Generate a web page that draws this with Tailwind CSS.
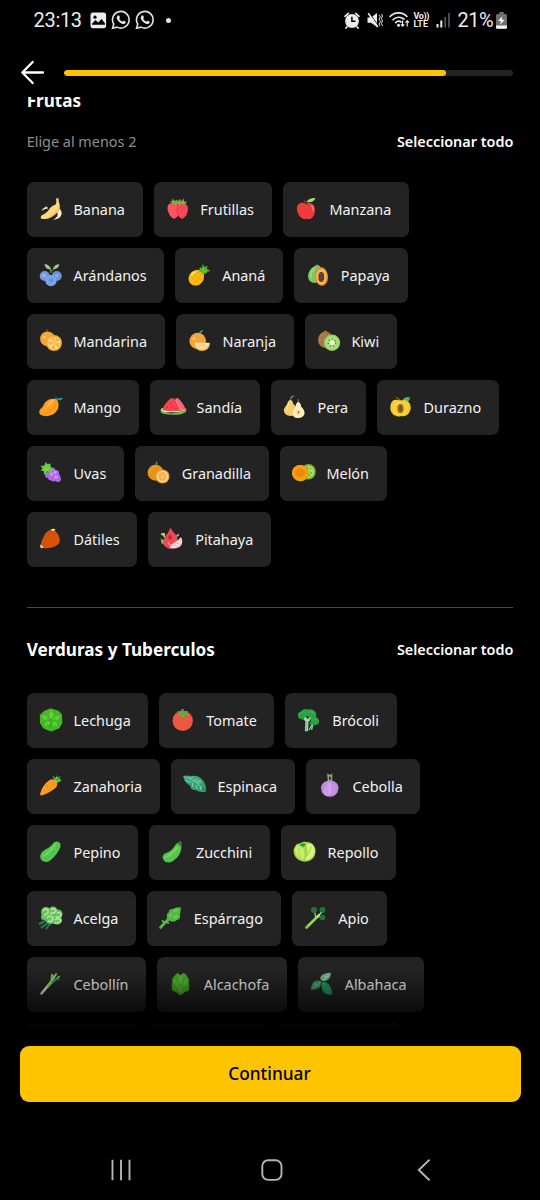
<!DOCTYPE html>
<html lang="es">
<head>
<meta charset="utf-8">
<title>Alimentos</title>
<script src="https://cdn.jsdelivr.net/npm/@tailwindcss/browser@4"></script>
</head>
<body class="bg-black">
<div class="flex h-[1200px] w-[540px] flex-col overflow-hidden bg-black font-['Noto_Sans',sans-serif] text-white">

  <!-- Status bar -->
  <div class="flex h-10 shrink-0 items-center pl-[33.5px] pr-[33px] font-[Roboto,sans-serif] text-[20px] text-[#ececec]">
    <span class="w-[56px] tracking-[-0.3px]">23:13</span>
    <svg class="h-[17px] w-[17px]" viewBox="0 0 17 17"><rect x=".5" y=".5" width="15.6" height="15.8" rx="2.5" fill="#ececec"/><circle cx="5" cy="5.2" r="1.6" fill="#000"/><path d="M2 11.8 5.5 8l2.6 2.5L11.6 7l3.3 4.2v1.6H2z" fill="#000"/></svg>
    <svg class="ml-[4.5px] h-[20px] w-[20px]" viewBox="0 0 20 20"><path d="M1.6 18.2 2.7 14A8.3 8.3 0 1 1 6 17.1z" fill="none" stroke="#e4e4e4" stroke-width="1.6"/><path d="M6.8 5.6c.5-.5 1.100-.4 1.400.2l.7 1.500c.2.5-.6 1.100-.6 1.400.6 1.300 1.600 2.200 3 2.800.4.1 1-.9 1.400-.8l1.700.9c.6.3.2 1.500-.4 2-1.300 1-3.200.4-4.900-.8-1.800-1.300-3.500-3.300-3.400-5.200 0-.8.5-1.500 1.100-2z" fill="#e4e4e4"/></svg>
    <svg class="ml-[3.5px] h-[20px] w-[20px]" viewBox="0 0 20 20"><path d="M1.6 18.2 2.7 14A8.3 8.3 0 1 1 6 17.1z" fill="none" stroke="#e4e4e4" stroke-width="1.6"/><path d="M6.8 5.6c.5-.5 1.100-.4 1.400.2l.7 1.500c.2.5-.6 1.100-.6 1.400.6 1.300 1.600 2.200 3 2.800.4.1 1-.9 1.400-.8l1.700.9c.6.3.2 1.500-.4 2-1.300 1-3.200.4-4.900-.8-1.800-1.300-3.500-3.300-3.400-5.200 0-.8.5-1.500 1.100-2z" fill="#e4e4e4"/></svg>
    <span class="ml-[11px] h-[5px] w-[5px] rounded-full bg-[#e4e4e4]"></span>
    <span class="flex-1"></span>
    <svg class="h-[17px] w-[16px]" viewBox="0 0 16 17"><circle cx="8" cy="9" r="6.900" fill="#ececec"/><path d="M1 4.300 4.300 1.300M15 4.300 11.700 1.300M3 14.800l-1 1.200M13 14.800l1 1.200" stroke="#ececec" stroke-width="1.700" stroke-linecap="round"/><path d="M7.900 4.800V9.300H11.500" fill="none" stroke="#000" stroke-width="1.500"/></svg>
    <svg class="ml-[6.500px] h-[17px] w-[16px]" viewBox="0 0 16 17"><path d="M.5 5.500H4L10 1v14L4 10.800H.5z" fill="#ececec"/><path d="M1.800 .3 12.300 15" stroke="#000" stroke-width="1"/><path d="M1.200 1.300 10.800 15" stroke="#ececec" stroke-width="1.600"/><path d="M12 3l1.500 2L12 7l1.500 2.500L12 12l1 2M14.500 2l1 2-1 2.300 1 2.500-1 2.500 1 2.500" fill="none" stroke="#ececec" stroke-width="1"/></svg>
    <svg class="ml-[6px] h-[18px] w-[21px]" viewBox="0 0 21 18"><g fill="none" stroke="#ececec" stroke-width="1.600" stroke-linecap="round"><path d="M1 5.500C5.500.6 13.500.6 18 5.500M4 8.700C7 5.500 12 5.400 15 8.200M6.800 11.600C8.300 10 10.600 9.900 12 11"/></g><circle cx="9.500" cy="14.200" r="1.500" fill="#ececec"/><path d="M13.600 9.500v5.500M11.900 13.300l1.700 1.900 1.700-1.900M18.200 15.500V10M16.500 11.600l1.700-1.900 1.700 1.900" fill="none" stroke="#ececec" stroke-width="1.200"/></svg>
    <span class="ml-[4px] flex w-[17px] flex-col text-[9px] font-bold leading-[8.500px]"><span class="tracking-[-0.4px]">Vo))</span><span>LTE</span></span>
    <svg class="ml-[5px] h-[16px] w-[15px]" viewBox="0 0 15 16"><path d="M1.500 12v3.500" stroke="#ececec" stroke-width="2"/><path d="M5.300 8.500v7" stroke="#ececec" stroke-width="2"/><path d="M9.200 5v10.500M13 1v14.500" stroke="#5b5b5b" stroke-width="1.600"/></svg>
    <span class="ml-[7px] w-[37.500px] tracking-[-0.5px]">21%</span>
    <svg class="ml-[1px] h-[17px] w-[11px]" viewBox="0 0 11 17"><path d="M3.300 0h4.400v2H9.500Q11 2 11 3.500V15.300Q11 16.800 9.500 16.800h-8Q0 16.800 0 15.300V3.500Q0 2 1.500 2H3.300z" fill="#707070"/><path d="M0 13.500H11v1.800q0 1.500-1.500 1.500h-8Q0 16.800 0 15.300z" fill="#f4f4f4"/><path d="M6.300 4.300 2.200 9h2.600l-.6 3.600L8.700 7.700H5.900z" fill="#fff"/></svg>
  </div>

  <!-- Progress header -->
  <header class="flex h-[57px] shrink-0 items-start pl-[20px] pr-[26.700px]">
    <svg class="mt-[20px] h-[25px] w-[25px]" viewBox="0 0 25 25"><path d="M12.700 2 2.300 12.500 12.700 23M2.600 12.500H23" fill="none" stroke="#fff" stroke-width="2.300" stroke-linecap="round" stroke-linejoin="round"/></svg>
    <div class="ml-[19.200px] mt-[29.500px] h-[6.500px] flex-1 overflow-hidden rounded-full bg-[#232323]">
      <div class="h-full w-[85.100%] rounded-full bg-[#ffc400]"></div>
    </div>
  </header>

  <!-- Scrollable list -->
  <main class="relative h-[949px] shrink-0 overflow-hidden">
    <div class="-mt-[8px] px-[26.700px]">
      <h2 class="h-6 text-[17.100px] font-bold leading-6">Frutas</h2>
      <div class="mt-[16.500px] flex h-6 items-center justify-between text-[14.400px]">
        <span class="text-[#8e8e8e]">Elige al menos 2</span>
        <button class="font-semibold">Seleccionar todo</button>
      </div>
      <div id="frutas" class="mt-[28px] flex flex-col gap-[11px]"></div>
      <hr class="mt-[40px] border-t border-[#474747]">
      <div class="mt-[30px] flex h-6 items-center justify-between">
        <h2 class="pt-px text-[17.150px] font-bold leading-6">Verduras y Tuberculos</h2>
        <button class="text-[14.400px] font-semibold">Seleccionar todo</button>
      </div>
      <div id="verduras" class="mt-[31px] flex flex-col gap-[11px]"></div>
    </div>
    <div class="pointer-events-none absolute inset-x-0 bottom-0 h-[76px] bg-gradient-to-b from-transparent to-black to-[82%]"></div>
  </main>

  <div class="shrink-0 px-[19.500px]">
    <button class="h-[55.500px] w-full rounded-[9px] bg-[#ffc400] pr-px text-[17.300px] font-medium text-black">Continuar</button>
  </div>

  <!-- System navigation -->
  <nav class="mt-[56.500px] flex h-6 shrink-0 items-center pl-[109px]">
    <svg class="h-6 w-6" viewBox="0 0 24 24"><path d="M3.500 1.800v20.400M12 1.800v20.400M20.500 1.800v20.400" stroke="#b4b4b4" stroke-width="1.900"/></svg>
    <svg class="ml-[127px] h-6 w-6" viewBox="0 0 24 24"><rect x="2.300" y="2.300" width="19.200" height="19.600" rx="5.800" fill="none" stroke="#b4b4b4" stroke-width="1.900"/></svg>
    <svg class="ml-[127px] h-6 w-6" viewBox="0 0 24 24"><path d="M18.500 1.800 7.800 12 18.500 22.200" fill="none" stroke="#b4b4b4" stroke-width="1.900"/></svg>
  </nav>
</div>

<script>
const icons = {
  banana: '<path d="M8 9.500Q3.500 10.500 2.700 14Q5 11.500 9 11.500z" fill="#f7e3a6"/><path d="M14.500 8.500Q23.500 11 22.500 17.500Q21 22.500 14 22.700Q19.500 20 18.500 16Q17.500 13.500 13 12z" fill="#fff0c2"/><path d="M17 1.500 19.500 1.200Q19.500 5 20.800 8Q21 14 15.500 18Q9 23.500 2 21.500Q1 20 2.500 18.500Q8.500 16 11 11Q13 8.500 16.700 7.500Q18 5 17 1.500z" fill="#fdd880"/><path d="M20.500 9Q17 17 8 20.500Q15 19.500 18.500 15Q21 12 20.500 9z" fill="#f3b95a"/>',
  frutilla: '<path d="M7 6Q1 5.500 1.500 12Q2.500 19 8 22Q13 20 13.500 13V6z" fill="#ff5263"/><path d="M15 6Q11 6 10.500 12Q10.500 18 15.500 22Q22 20 22 11Q21 5.500 15 6z" fill="#f9455a"/><path d="M11.500 7Q9.500 13 13 20" fill="none" stroke="#d93a50" stroke-width=".8"/><path d="M3.500 4 6 4.500 6.500 1.500 8.500 4 11 2.500 11.500 4.500 14 2 15 4.500 17.500 1.500 18 4.500 21 4.500 18.500 8 15.500 6.500 13.500 8 11 6.500 8 8z" fill="#79b33b"/><path d="M5 11v1M8 14v1M5.500 17v1M15 11v1M18 14v1M15 17v1" stroke="#ff7d88" stroke-width=".8"/>',
  manzana: '<path d="M11.500 7Q6 3.500 2.700 8Q.5 13 4.500 19Q7.500 23.500 11.500 21.800Q16 23.500 18.800 18.500Q21.500 12 18.500 8Q15.500 4.500 11.500 7z" fill="#ee3b3c"/><path d="M16 8.500Q18.500 9.500 17.800 13.500" fill="none" stroke="#ff8380" stroke-width="1.400"/><path d="M11.500 8Q11 5 9.500 3.500" fill="none" stroke="#8f3930" stroke-width="1.300"/><path d="M11.500 5Q14 .7 20.500 1Q18 6.500 11.500 5z" fill="#a4e36b"/>',
  arandanos: '<path d="M12 10Q12 6 10.500 3.500M12 8Q14 7.500 16 5" fill="none" stroke="#6fa15b" stroke-width="1.100"/><path d="M5.500 1Q11 1.500 11.200 6.500Q6 6 5.500 1zM20.500 1.200Q15 1.200 14 6Q19 6.500 20.500 1.200z" fill="#a2c98c"/><circle cx="5.700" cy="13" r="5" fill="#7099dc"/><circle cx="17.800" cy="13" r="5" fill="#6a93d8"/><circle cx="12" cy="17.500" r="5.700" fill="#7da3e6"/><circle cx="5" cy="12.500" r="2" fill="#8fb3ee"/><circle cx="18" cy="12.500" r="1.900" fill="#86aae6"/><path d="M10 17.500l2 1.500 2-1.500-.5-2h-3z" fill="#6389cf"/>',
  anana: '<ellipse cx="9.300" cy="14.700" rx="7.300" ry="8.300" transform="rotate(40 9.300 14.700)" fill="#fcbc14"/><path d="M4 14 12 20M5.500 10.500 15 17M9.500 8 16 13M4 18 11 8.500M7 21 15 10.500" stroke="#f0a20f" stroke-width=".8"/><path d="M4.500 12Q6 9.500 9 9" stroke="#ffe765" stroke-width="1.500" fill="none"/><path d="M12 8 13 4 15 5 15.500 1 18 4 20.500 2.500 20 6 23.500 7.500 20 9.500 17.500 11.500z" fill="#4fa42e"/><path d="M14 8 17.500 5M15.500 9.500 20 7" stroke="#80ce3c" stroke-width="1.300"/>',
  papaya: '<path d="M10 2.500Q10.500 1 12 2Q16 3 16 11Q15.500 19 9 20Q2 19.500 2 13Q2.500 6.500 8 3.500z" fill="#7fc563"/><path d="M5 15Q3.500 9 9 4.500" fill="none" stroke="#a0d780" stroke-width="1.700"/><ellipse cx="15.500" cy="13.500" rx="6.500" ry="9.300" transform="rotate(-5 15.500 13.500)" fill="#eb8a35"/><ellipse cx="15.500" cy="13.700" rx="5.200" ry="8" fill="#ffb351"/><ellipse cx="15.300" cy="14" rx="2.900" ry="5" fill="#573b32"/><path d="M14.300 11v1M16 13v1M14.300 15v1M16 17v.8" stroke="#947167" stroke-width="1"/>',
  mandarina: '<circle cx="8.500" cy="9.800" r="7.400" fill="#f5a638"/><path d="M8 3V.5" stroke="#8f6532" stroke-width="1.300"/><circle cx="5.500" cy="8" r="1.500" fill="#ffc55f"/><circle cx="15" cy="14" r="8" fill="#f7ab33"/><circle cx="15" cy="14" r="6.300" fill="#ffe4a0"/><path d="M15 14 11 9.500Q13 8 15.500 8zM15 14 17 8.300Q20 9.500 20.500 12zM15 14 20.700 14Q20.500 17 18.500 18.500zM15 14 16.500 19.500Q13.500 20.200 11.800 18.700zM15 14 10.300 17Q8.500 14 9.700 11.500z" fill="#fcb53f"/>',
  naranja: '<path d="M11 4Q11.500 2 14 1Q15 1.500 15 2.500Q13 4 11 4" fill="#2fa57c"/><circle cx="9.700" cy="12" r="8.300" fill="#f6a43d"/><circle cx="6" cy="9.500" r="1.500" fill="#ffc670"/><path d="M5.800 14.200H22.200Q21 22 14 22Q7 21.500 5.800 14.200z" fill="#f5b34b"/><path d="M6.500 13.800H21.500Q19.500 20.500 14 20.500Q8.500 20.500 6.500 13.800z" fill="#ffe2a4"/><path d="M13.500 15 9.300 16Q10.300 18.500 12 19.300zM14.500 15 15.500 19.300Q18 18.500 19 16z" fill="#ffcd7d"/>',
  kiwi: '<path d="M8 2 9 1 9.500 2.500Q15 3.500 15.500 10.500Q15 19 8 19Q1 18 1 10Q2 4 8 2z" fill="#a87649"/><path d="M5 5 4 7M3 10v2M8 5 7 7" stroke="#bd8b5e" stroke-width=".8"/><circle cx="15" cy="13.800" r="8.200" fill="#91ca61"/><circle cx="15" cy="13.800" r="7" fill="#a8e078"/><circle cx="15" cy="13.800" r="2.500" fill="#efffd2"/><g fill="none" stroke="#45743c" stroke-width="1.400" stroke-dasharray="1 2.350"><circle cx="15" cy="13.800" r="3.700"/></g>',
  mango: '<path d="M16 4 18.500 4" stroke="#775942" stroke-width="1.300"/><path d="M18 4Q20 2 24 3Q22.500 6.500 18 5z" fill="#1c9a83"/><path d="M17 1.500V4" stroke="#1c7b75" stroke-width="1"/><path d="M17 4Q10 2.500 6 7.500Q4 12 1 14.500Q-1 18 2 20Q7 22.500 13.500 19.500Q20 16 19.500 9.500Q19.500 5.500 17 4z" fill="#ff9f22"/><path d="M16 4.500Q12 11 3 16Q9 11 11 5.500z" fill="#ffb84c"/><path d="M17.500 7Q15 15 6 19.500" stroke="#f88f1a" fill="none" stroke-width="1"/>',
  sandia: '<path d="M-1.500 15.500 9.500 18.500 24.500 15.500Q24.500 17.500 19 19.200Q10 20.500 2.500 19Q-1.500 18 -1.500 15.500z" fill="#62c540"/><path d="M-1.500 15.300Q1 17.300 6 17.300H14Q20 17 24.500 15L23 13H0z" fill="#d8f7b3"/><path d="M13.500 4Q14.500 2.500 16.500 3.500Q22 9 23.500 14.500Q20 16.500 16 16.500z" fill="#fa6470"/><path d="M8 4Q9 2.500 11 3.500Q16.500 9.500 18.500 15Q12 17.500 0 15Q3 8 8 4z" fill="#f44351"/><path d="M12 3.500Q17 9 19 15.500" fill="none" stroke="#ffb3ae" stroke-width=".8"/><path d="M8.500 8v1M5.500 12v1M10 12v1M14 13v1" stroke="#9d2b3e" stroke-width=".9"/>',
  pera: '<path d="M7.500 6Q7.500 2 9.500 .8M8 2.500 11 1" fill="none" stroke="#839987" stroke-width="1"/><path d="M7.500 5Q9.500 5 10.300 9Q15 12 14.500 17Q13 21 7 21Q.7 20 .7 14.500Q2.500 11.500 4.200 9Q5 5 7.500 5z" fill="#f5cf6c"/><path d="M4.500 16Q3 12.500 6.500 8" stroke="#fbdc8c" fill="none" stroke-width="1.500"/><path d="M15.500 8 15 4" stroke="#8f8169" stroke-width="1"/><path d="M15.500 7Q18 8 18 11.500Q22 15 21.500 19Q20 23 15 23Q10 23 9.500 18.500Q10 15 12.500 12Q13 7 15.500 7z" fill="#fff0c3"/><ellipse cx="15.500" cy="17.500" rx="2.300" ry="3" fill="#f5d88e"/><path d="M15.500 16.500v1.500" stroke="#7c6845" stroke-width="1.200"/>',
  durazno: '<path d="M14 4Q17 1 21 2.500Q21 6.500 16 8Q13 7 14 4z" fill="#4eaf69"/><path d="M11.500 6Q10 3.500 7 2.500" fill="none" stroke="#947337" stroke-width="1.300"/><path d="M11.500 5.500Q3 2.500 1.500 10Q0 19 7.500 21Q10 22 11.500 21Q15 22 18 20Q23 16 21.300 9.500Q18.500 3.500 11.500 5.500z" fill="#f7c92e"/><path d="M11.500 6.500Q5 7.500 5 14Q5.500 18 9 20M11.500 6.500Q18 7.500 18 14Q17 18 14 20" fill="none" stroke="#fad548" stroke-width="1.500"/><ellipse cx="11.500" cy="13.500" rx="3" ry="4.600" fill="#936a27"/><ellipse cx="11.500" cy="13.500" rx="1.200" ry="2.700" fill="#74531f"/>',
  uvas: '<g fill="#b267e8"><circle cx="9" cy="14" r="3"/><circle cx="13" cy="10" r="3.500"/><circle cx="17" cy="12" r="3"/><circle cx="12" cy="16.500" r="3"/><circle cx="18" cy="16" r="3.300"/><circle cx="15.500" cy="14" r="3.500"/><circle cx="19" cy="18" r="2.900"/><circle cx="14.500" cy="18" r="2.500"/></g><g fill="#d195ff"><circle cx="12.500" cy="13" r="1.800"/><circle cx="16" cy="11.500" r="1.500"/><circle cx="17" cy="16" r="1.800"/></g><path d="M1.500 5 5.500 4.500 6.500 1 8.500 3 11.500 2.500 11.500 5.500 14 8 12 12 8.500 10.500 5.500 14 4.500 10 1.500 9.500 3.500 7.500z" fill="#65c942"/><path d="M6 4 8 9 4 7.500M8 9 11 5" fill="none" stroke="#86dc58" stroke-width=".9"/>',
  granadilla: '<path d="M9.500 4Q9 2 10 .7" fill="none" stroke="#4c9d58" stroke-width="1.500"/><circle cx="8.600" cy="11.700" r="8" fill="#e59318"/><path d="M3 12Q4 6 9 5" fill="none" stroke="#efa42c" stroke-width="1"/><circle cx="15.500" cy="15.500" r="7" fill="#f2a337"/><circle cx="15.500" cy="15.500" r="5.600" fill="#ffe9b3"/><circle cx="15.500" cy="15.500" r="4.500" fill="#f2ac4b"/><path d="M11 15.500h9M15.500 11v9M12.500 12.200l6 6.500M18.500 12.200l-6 6.500" stroke="#f8c16b" stroke-width=".8"/>',
  melon: '<ellipse cx="16.500" cy="10.700" rx="7.300" ry="7.700" fill="#79b538"/><ellipse cx="16.500" cy="10.700" rx="5.500" ry="6" fill="#b4df65"/><path d="M15 6l1 1.500M19 7l-1 1.500M20 12h-2M18 15l-1-1.500" stroke="#5d8f2c" stroke-width="1.200"/><ellipse cx="8.500" cy="12.200" rx="8.500" ry="8.300" fill="#97bd2d"/><ellipse cx="8" cy="11.700" rx="7.800" ry="7.700" fill="#ff9d08"/><ellipse cx="8" cy="11.700" rx="5" ry="4.700" fill="#f88607"/><path d="M5 10h2M9 9.500h2M5.500 13.500h2M10 13h2" stroke="#c98b1c" stroke-width="1"/>',
  datiles: '<path d="M14 2.500Q10 2 6 7Q3 12 1.500 19Q2.500 22 9 21Q17 20.500 20.500 15.500Q22 10 16.500 4z" fill="#d95409"/><path d="M14 4Q8 8 5 18M16 6Q14 13 7 19" fill="none" stroke="#c44707" stroke-width=".8"/><ellipse cx="14.200" cy="2.700" rx="2.200" ry="1" fill="#f3dcbc"/><path d="M1.300 17.500Q3.300 18 4.300 20.800Q2 22 1.300 20z" fill="#eed0ad"/>',
  pitahaya: '<path d="M1 6 5 9V6zM0 11l5 3-4 2 4 2M20 7l-3 2" fill="#abca70"/><path d="M1 7Q4 7.500 5 10.500M1 14.500Q4 14 5.500 16M19 7.500Q17 8 15.500 11" stroke="#abca70" fill="none" stroke-width="1.600"/><path d="M10.500 .8Q13 5.500 16 8Q19.500 14 16.500 19Q13 23.500 7.500 21Q2.500 19 3.500 13Q5 8.500 7.500 6.500z" fill="#f14658"/><path d="M10 7 8 11Q9 12.500 10.500 12.500Q12.500 11.500 11.500 9z" fill="#ad2946"/><path d="M8 15q1 3 3 3" stroke="#ff9c9d" fill="none" stroke-width="1.200"/><path d="M21 10Q24 16 20 19.500Q15.500 23 9.500 20.500Q10.500 18 14.500 15.500Q18.500 13.500 21 10z" fill="#fbddd8"/><path d="M20.500 13.500v.8M18 16v.8M20 17.500v.8M15 18v.8M17 19.500v.8" stroke="#8a666a" stroke-width=".9"/>',
  lechuga: '<path d="M11.500.8 20 3.500 22.500 7 22.800 15 20 20 12 23 4.500 20 1.500 15 1.300 7 5 3.500z" fill="#46b826" stroke="#46b826" stroke-width="1" stroke-linejoin="round"/><path d="M12 2Q8 7 12 11Q17 8 12 2M3 8Q7 6 10 11Q5 14 3 8M21 8Q17 6 14 12Q19 14 21 8M6 18Q5 13 11 13Q12 18 6 18M18 18Q19 14 13 13Q12 18 18 18" fill="#5ed238"/><path d="M12 20V11M12 14 7 10M12 16 17 11M12 19 8 16" fill="none" stroke="#34a31f" stroke-width=".8"/>',
  tomate: '<circle cx="11.700" cy="12.700" r="10.200" fill="#eb5740"/><path d="M10.500 1 12.500 1 12.700 3.500 17.500 3 15 5.500 18 7.500 14 7.300 11.700 11 10 7.300 6 8 8.500 5.500 6 3 10.500 4z" fill="#64aa44"/>',
  brocoli: '<path d="M8 9 11 12 10.500 22.500H8.500L9 13 6 10M12 13 14 9M15.500 16 12 22M16 16 14.500 22" fill="none" stroke="#8bce9b" stroke-width="1.300"/><path d="M1 8.500Q0 4.500 4 3.500Q7 0 11 1.500Q16 .5 18.500 4Q20 6 19 9Q23 11 22 15Q20 18 16 16.500Q13 18 12.500 15Q15 12.500 13 9Q10 7.500 8.500 9.500Q7 12.500 4 11Q1.500 11 1 8.500z" fill="#2aa243"/><path d="M3 6Q5 3.500 8 4M12 3.500Q16 3 17 6M15.500 12Q18 10.500 20 12" fill="none" stroke="#34b04e" stroke-width="1.500"/><path d="M7.500 9.500 10 13V22M10 14l3-5" fill="none" stroke="#b0dfb8" stroke-width="1.300"/>',
  zanahoria: '<path d="M15 7 13.500 1.500 17 4 17.500 .8 19 3.500 21.500 2 21 5 23 6.500 18 9z" fill="#39a22d"/><path d="M16 7 18 3M17 8l4-2" stroke="#6bd645" stroke-width="1.500"/><path d="M10.500 6Q13.500 4 17 7Q19.500 10 17 13.500Q12 18 3 21.500Q.5 21.500 1.300 19Q4 10.500 10.500 6z" fill="#ff9b22"/><path d="M7 11l2 1.500M13 9l2 2M10 15l1.500 1.500" stroke="#e5830f" stroke-width="1"/>',
  espinaca: '<path d="M0 2Q3 .8 8 2Q16 .5 20.500 7Q23.500 12 23 17.500Q17 19 12.500 16Q8 16.500 7 11.500Q2 10 0 2z" fill="#34a077"/><path d="M1 3Q10 4 19 14M2 5.500Q5 8 8 8M7 4l4-1M10 7l4-2.500M14 10l4-2.500M9 8l1 5M13 11l1 4M17 13l1 3" fill="none" stroke="#86d0a8" stroke-width="1"/><path d="M2 3Q7 1.500 10 4Q5 5 2 3M12 7Q17 3 19 8Q17 11 12 7" fill="#5cbd90"/><path d="M19 14 23.500 17.500" stroke="#1f7a5a" stroke-width="1.300"/>',
  cebolla: '<path d="M10.500 7 10 .8 12 2 13.500 .8V7" fill="none" stroke="#86ad66" stroke-width="1.500"/><path d="M11.800 5.500Q12 6 15 7Q20.500 8.800 20.500 14Q20 22.500 11.700 22.800Q3.500 22.500 3 14Q3 8.800 9 7Q11 6 11.800 5.500z" fill="#c08ce0"/><path d="M11 7Q5 12.500 9.500 21.500Q3 17.500 11 7zM12.500 7Q19 13.500 14 21.500Q20 15 12.500 7z" fill="#dcaef3"/><ellipse cx="11.500" cy="14.500" rx="2.500" ry="6.500" fill="#d0a0ec"/>',
  pepino: '<path d="M15.500 2Q19 .5 21 3Q22.500 6 20 10Q15 18.500 9.500 21.500Q4.500 23 2 19.500Q0 16 3 12Q6.500 9 10 7.500Q13 5 15.500 2z" fill="#54c84e"/><path d="M4.500 16Q9 13.500 16 5" fill="none" stroke="#72d662" stroke-width="1.800" stroke-linecap="round"/><path d="M10 16v1M14 12v1M18 7v1M7 18v1" stroke="#3aa840" stroke-width=".9"/>',
  zucchini: '<path d="M17.500 1.500 20 1 21 3.500 19.500 6z" fill="#416c43"/><path d="M17 2.500Q20.500 3 20.500 7Q20 16 12 21Q6 24.500 2.500 20Q0 16 4 13.500Q10 11.500 13 7Q14.500 4 17 2.500z" fill="#55c44a"/><path d="M4.500 17Q12 14.500 16.500 7" fill="none" stroke="#74d65c" stroke-width="2" stroke-linecap="round"/><path d="M19.800 5.500 17.300 2.500" stroke="#35703f" stroke-width="1.800"/>',
  repollo: '<path d="M8 3Q10 1 14 2Q20 2 22 8Q23.500 12 21 17Q17 22.500 10 21.500Q3 20 1 14Q-.5 8 4 4z" fill="#a8d74b"/><path d="M8 4 11 3 13 5 10 7 6 5z" fill="#2f9b32"/><path d="M4 5Q0 10 4 16Q6 17 10 20Q13 15 10 8Q7 5 4 5z" fill="#c8ec68"/><path d="M13 5Q20 2 21.500 9Q22 15 17 19Q14 20 12 20Q17 11 13 5z" fill="#d9f285"/><path d="M18 6Q18 13 12 18M6 8Q4 12 8 17" fill="none" stroke="#9fd24b" stroke-width=".9"/>',
  acelga: '<path d="M10 13 0 18M11 15 2 22M13 15 7 23" stroke="#248044" stroke-width="2"/><g fill="#6bc164"><circle cx="7" cy="6" r="5"/><circle cx="14" cy="5" r="4.500"/><circle cx="19" cy="8" r="4.500"/><circle cx="12" cy="12" r="6"/><circle cx="18.500" cy="14" r="4.500"/><circle cx="5" cy="11" r="3"/></g><g fill="none" stroke="#b5e898" stroke-width="1.500"><path d="M4 5Q6 1.500 9 4Q10 8 5 9M12 4Q16 1 17 5Q15 8 11 7M18 7Q22 5 22 10Q18 13 17 10M8 12Q11 8 14 12Q13 17 9 15M16 14Q20 11 22 15Q18 18 15 17"/></g>',
  esparrago: '<path d="M9.500 13 1.500 21.500" stroke="#58b948" stroke-width="2.600" stroke-linecap="round"/><path d="M3 14.500 6 17M10 17 7 16" stroke="#58b948" stroke-width="2"/><path d="M22 1.500 21 9Q22 13 18 14Q15 17 11.500 15Q8 15 8 11Q7 8 10 6Q10 2.500 14 3Q17 .5 22 1.500z" fill="#52b546"/><path d="M10 12Q9 8 13 7Q15 10 10 12M14 6Q15 2.500 20 3Q19 7 14 6M14 13Q14 8 19 9Q19 13 14 13" fill="#66cb53"/>',
  apio: '<path d="M2.500 21.500 14.500 9.500" stroke="#7fc838" stroke-width="2.800" stroke-linecap="round"/><path d="M4 20 17 7M12 12 10 4M13 11 20 11M16 8 18.500 4" fill="none" stroke="#a9de60" stroke-width="1.100"/><g fill="#28713f"><circle cx="10" cy="4" r="3"/><circle cx="18.500" cy="4" r="3"/><circle cx="18.500" cy="11.500" r="2.800"/></g><path d="M13 11.500 17.500 6.500" stroke="#e9f7d0" stroke-width="1"/>',
  cebollin: '<path d="M2.500 21.500 12 10" stroke="#e7eed2" stroke-width="2.500" stroke-linecap="round"/><path d="M8.500 14.800 15 7" stroke="#8dcb54" stroke-width="2.800"/><path d="M12 11 13 2M13 9 17.500 1.500M13 11 20.500 4" fill="none" stroke="#85c54a" stroke-width="1.700"/><path d="M13 11Q16 6 20.500 7" fill="none" stroke="#168d82" stroke-width="1.800"/><path d="M12.500 9 15 3" stroke="#e2c643" stroke-width="1"/>',
  alcachofa: '<path d="M11.500 20V23" stroke="#6aa646" stroke-width="2.500"/><path d="M6 3.500Q7.500 .8 10 2L11.500 4 13.500 1.500Q17 1 17.500 4L19.500 7 20 14 19.500 18.500 15.500 20 13.500 22H9.500L7.500 20 3.500 18.500 3 14 3.500 7z" fill="#45a527" stroke="#45a527" stroke-width=".6" stroke-linejoin="round"/><path d="M11.500 3Q7 8 11.500 13Q16 8 11.500 3M5 7Q4 13 9.500 16Q10.500 11 5 7M18 7Q19 13 13.500 16Q12.500 11 18 7M11.500 13Q8 17 11.500 21.500Q15 17 11.500 13" fill="#5aba36"/>',
  albahaca: '<path d="M12 8.500Q9 7 11 4Q13.500 1 21 .8Q20.500 7 16.500 8.500Q14 10 12 8.500z" fill="#6caf83"/><path d="M12.500 8.500 19 2.500M15 6V4M16 5h2" stroke="#a5d7ae" stroke-width=".8" fill="none"/><path d="M11.500 9.500Q11 16 6.500 17Q4 18 .7 17.500Q1.500 10.500 5.500 9Q8.500 8 11.500 9.500z" fill="#3c9465"/><path d="M2 16.500 10 10.500M5 14V11M6 13h3" stroke="#76bb85" stroke-width=".7" fill="none"/><path d="M12 10Q15 9 18.500 12Q22.500 17 22 22.500Q15 23.500 12.500 18.500Q10.500 14 12 10z" fill="#24945e"/><path d="M13 11 20.500 21.500" stroke="#3fa56d" stroke-width=".7" fill="none"/>'
};

const frutas = [
  [['Banana','banana'],['Frutillas','frutilla'],['Manzana','manzana']],
  [['Arándanos','arandanos'],['Ananá','anana'],['Papaya','papaya']],
  [['Mandarina','mandarina'],['Naranja','naranja'],['Kiwi','kiwi']],
  [['Mango','mango'],['Sandía','sandia'],['Pera','pera'],['Durazno','durazno']],
  [['Uvas','uvas'],['Granadilla','granadilla'],['Melón','melon']],
  [['Dátiles','datiles'],['Pitahaya','pitahaya']]
];
const verduras = [
  [['Lechuga','lechuga'],['Tomate','tomate'],['Brócoli','brocoli']],
  [['Zanahoria','zanahoria'],['Espinaca','espinaca'],['Cebolla','cebolla']],
  [['Pepino','pepino'],['Zucchini','zucchini'],['Repollo','repollo']],
  [['Acelga','acelga'],['Espárrago','esparrago'],['Apio','apio']],
  [['Cebollín','cebollin'],['Alcachofa','alcachofa'],['Albahaca','albahaca']]
];

const chip = ([name, icon]) => `<button class="flex h-[55px] shrink-0 items-center rounded-[7px] bg-[#232323] pl-3 pr-[17.700px] text-[14.400px] text-[#f2f2f2]"><svg class="mr-[10.800px] h-6 w-6 overflow-visible" viewBox="0 0 24 24">${icons[icon]}</svg><span class="pt-px">${name}</span></button>`;
const rows = list => list.map(r => `<div class="flex gap-[11px]">${r.map(chip).join('')}</div>`).join('');
document.getElementById('frutas').innerHTML = rows(frutas);
document.getElementById('verduras').innerHTML = rows(verduras) +
  '<div class="flex gap-[11px]"><div class="h-[55px] w-[112px] rounded-[7px] bg-[#232323]"></div><div class="h-[55px] w-[116px] rounded-[7px] bg-[#232323]"></div><div class="h-[55px] w-[124px] rounded-[7px] bg-[#232323]"></div></div>';
</script>
</body>
</html>
